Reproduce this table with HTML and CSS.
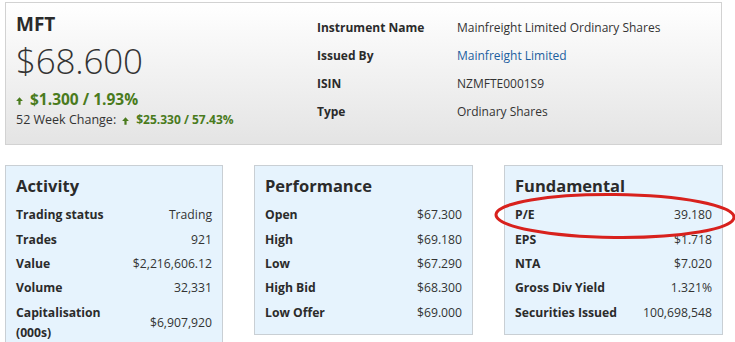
FILE: index.html
```html
<!DOCTYPE html>
<html lang="en">
<head>
<meta charset="utf-8">
<title>MFT</title>
<link rel="stylesheet" href="styles.css">
</head>
<body>
<div class="page">
  <section class="summary">
    <div class="quote">
      <h1 class="code">MFT</h1>
      <div class="price">$68.600</div>
      <div class="change up"><svg class="arrow" viewBox="0 0 7 8" width="7" height="8"><path d="M3.5 0.2 L6.9 3.9 L4.6 3.9 L4.6 7.8 L2.4 7.8 L2.4 3.9 L0.1 3.9 Z"/></svg>$1.300 / 1.93%</div>
      <div class="week">52 Week Change: <span class="up week-val"><svg class="arrow" viewBox="0 0 7 8" width="7" height="8"><path d="M3.5 0.2 L6.9 3.9 L4.6 3.9 L4.6 7.8 L2.4 7.8 L2.4 3.9 L0.1 3.9 Z"/></svg>$25.330 / 57.43%</span></div>
    </div>
    <dl class="details">
      <dt>Instrument Name</dt><dd>Mainfreight Limited Ordinary Shares</dd>
      <dt>Issued By</dt><dd><a class="link" href="#">Mainfreight Limited</a></dd>
      <dt>ISIN</dt><dd>NZMFTE0001S9</dd>
      <dt>Type</dt><dd>Ordinary Shares</dd>
    </dl>
  </section>

  <div class="panels">
    <section class="panel">
      <h2>Activity</h2>
      <dl class="rows">
        <dt>Trading status</dt><dd>Trading</dd>
        <dt>Trades</dt><dd>921</dd>
        <dt>Value</dt><dd>$2,216,606.12</dd>
        <dt>Volume</dt><dd>32,331</dd>
        <dt>Capitalisation<br>(000s)</dt><dd>$6,907,920</dd>
      </dl>
    </section>
    <section class="panel">
      <h2>Performance</h2>
      <dl class="rows">
        <dt>Open</dt><dd>$67.300</dd>
        <dt>High</dt><dd>$69.180</dd>
        <dt>Low</dt><dd>$67.290</dd>
        <dt>High Bid</dt><dd>$68.300</dd>
        <dt>Low Offer</dt><dd>$69.000</dd>
      </dl>
    </section>
    <section class="panel fundamental">
      <h2>Fundamental</h2>
      <dl class="rows">
        <dt>P/E</dt><dd>39.180</dd>
        <dt>EPS</dt><dd>$1.718</dd>
        <dt>NTA</dt><dd>$7.020</dd>
        <dt>Gross Div Yield</dt><dd>1.321%</dd>
        <dt>Securities Issued</dt><dd>100,698,548</dd>
      </dl>
      <svg class="highlight" viewBox="0 0 242 48" width="242" height="48"><ellipse cx="121" cy="24" rx="119" ry="21.5" fill="none" stroke="#d8211d" stroke-width="3" transform="rotate(0.6 121 24)"/></svg>
    </section>
  </div>
</div>
</body>
</html>
```

FILE: styles.css
```css
* { box-sizing: border-box; }
html, body { margin: 0; padding: 0; background: #fff; }
body {
  font-family: "Open Sans", "Liberation Sans", sans-serif;
  color: #333;
  font-size: 13px;
}
.page {
  padding: 2px 13px 0 5px;
  width: 735px;
}
.summary {
  display: grid;
  grid-template-columns: 300px 1fr;
  padding: 9px 10px 15px 10px;
  border: 1px solid #d2d2d2;
  background: linear-gradient(#ffffff, #e4e4e4);
  height: 143px;
}
.quote { display: flex; flex-direction: column; }
.code {
  margin: 0;
  font-size: 19px;
  line-height: 24px;
  font-weight: 700;
  color: #2b2b2b;
}
.price {
  font-size: 35px;
  line-height: 50px;
  font-weight: 300;
  color: #333;
  letter-spacing: -0.2px;
}
.up { color: #4a7b1d; }
.change {
  margin-top: 3px;
  font-size: 15.5px;
  line-height: 20px;
  font-weight: 700;
  display: flex;
  align-items: center;
}
.change .arrow { margin: 3px 7px 0 0; }
.arrow { fill: #4a7b1d; width: 7px; height: 8px; flex: none; }
.week {
  margin-top: 1px;
  font-size: 12.5px;
  line-height: 20px;
  color: #333;
  display: flex;
  align-items: center;
}
.week-val {
  font-weight: 700;
  font-size: 12px;
  display: inline-flex;
  align-items: center;
  margin-left: 6px;
}
.week-val .arrow { margin: 1px 7px 0 0; }
.details {
  margin: 0;
  padding: 2px 0 0 1px;
  display: grid;
  grid-template-columns: 140px 1fr;
  grid-auto-rows: 28px;
  align-items: center;
  font-size: 12px;
  line-height: 28px;
}
.details dt { font-weight: 700; color: #2b2b2b; }
.details dd { margin: 0; color: #333; }
.link { color: #1d5f9f; text-decoration: none; }

.panels {
  margin-top: 20px;
  display: grid;
  grid-template-columns: 218px 219px 219px;
  column-gap: 31px;
  align-items: start;
}
.panel {
  position: relative;
  background: #e6f3fd;
  border: 1px solid #c9cfd4;
  padding: 8px 10px 9px 10px;
}
.panel h2 {
  margin: 0 0 5px 0;
  font-size: 16.5px;
  line-height: 24px;
  font-weight: 700;
  color: #2b2b2b;
}
.rows {
  margin: 0;
  display: grid;
  grid-template-columns: auto 1fr;
  align-items: center;
  font-size: 12.2px;
  line-height: 20px;
}
.rows dt {
  font-weight: 700;
  color: #2b2b2b;
  padding: 2.2px 0;
}
.rows dd {
  margin: 0;
  text-align: right;
  padding: 2.2px 0;
  color: #333;
}
.highlight {
  position: absolute;
  left: -11px;
  top: 26px;
  overflow: visible;
}
```
